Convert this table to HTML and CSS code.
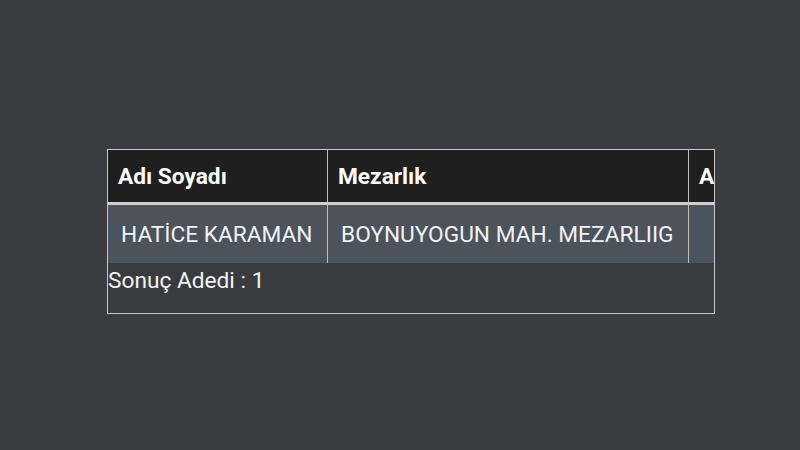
FILE: index.html
```html
<!DOCTYPE html>
<html lang="tr">
<head>
<meta charset="utf-8">
<link rel="stylesheet" href="styles.css">
</head>
<body>
<div class="panel">
  <div class="scroller">
    <table class="grid">
      <colgroup>
        <col class="c1"><col class="c2"><col class="c3">
      </colgroup>
      <thead>
        <tr><th>Adı Soyadı</th><th>Mezarlık</th><th>Ada / Parsel</th></tr>
      </thead>
      <tbody>
        <tr><td>HATİCE KARAMAN</td><td>BOYNUYOGUN MAH. MEZARLIIG</td><td></td></tr>
      </tbody>
    </table>
  </div>
  <div class="count">Sonuç Adedi : 1</div>
</div>
</body>
</html>
```
FILE: styles.css
```css
html, body {
  margin: 0;
  height: 100%;
}
body {
  background: #3b3c40;
  font-family: Roboto, "Liberation Sans", sans-serif;
  color: #f2f2f2;
  padding: 149px 0 0 107px;
  box-sizing: border-box;
}
.panel {
  width: 606px;
  height: 163px;
  border: 1px solid #c8c8c8;
  background: #3a3b3f;
  overflow: hidden;
}
.scroller {
  overflow: hidden;
  width: 606px;
}
.grid {
  border-collapse: separate;
  border-spacing: 0;
  table-layout: fixed;
  width: 781px;
}
.c1 { width: 220px; }
.c2 { width: 361px; }
.c3 { width: 200px; }
.grid th {
  background: #1f1f1f;
  color: #ffffff;
  font-weight: 700;
  font-size: 22.7px;
  text-align: left;
  height: 55px;
  padding: 0 10px;
  border-right: 1px solid #bdbdbd;
  border-bottom: 3px solid #cfcfcf;
  white-space: nowrap;
  box-sizing: border-box;
  vertical-align: middle;
}
.grid td {
  background: #4b535d;
  font-size: 22.7px;
  height: 58px;
  padding: 0 13px;
  border-right: 1px solid #bdbdbd;
  white-space: nowrap;
  vertical-align: middle;
  box-sizing: border-box;
}
.count {
  font-size: 22.7px;
  padding-top: 5px;
  line-height: 26px;
}
```
